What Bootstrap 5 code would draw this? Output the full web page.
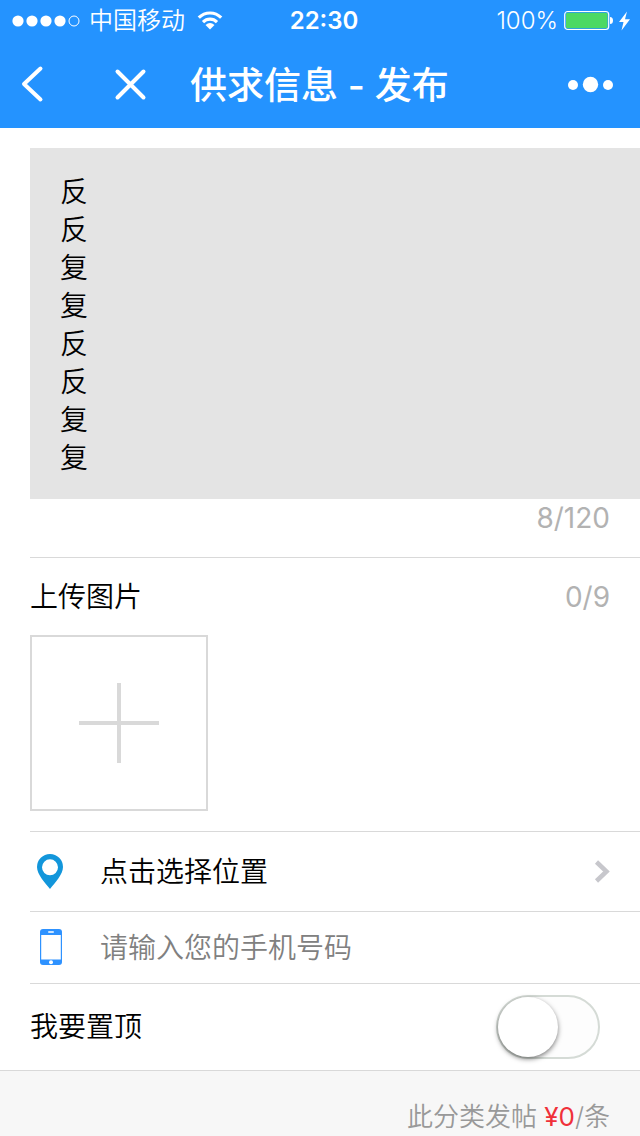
<!DOCTYPE html>
<html lang="zh-CN">
<head>
<meta charset="utf-8">
<meta name="viewport" content="width=device-width, initial-scale=1">
<title>供求信息 - 发布</title>
<link href="https://cdn.jsdelivr.net/npm/bootstrap@5.3.0/dist/css/bootstrap.min.css" rel="stylesheet">
<style>
  body { font-family: Inter, "Noto Sans CJK SC", sans-serif; font-size: 28px; line-height: 38px; font-weight: 350; color: #000; background: #fff; }
  svg { display: block; flex: none; }
  .top-area { background: #2493ff; color: #fff; }
  .status-bar { height: 40px; font-size: 24px; padding: 2px 4px 0 12px; }
  .status-side { flex: 1 1 0; gap: 8px; }
  .battery-side { gap: 6px; }
  .clock { font-weight: 600; }
  .title-bar { height: 88px; padding: 0 26px 0 20px; }
  .title-bar h1 { font-size: 37px; line-height: 44px; font-weight: 500; margin: 0 0 0 42px; padding-top: 4px; }
  .icon-btn { color: inherit; background: none; border: 0; padding: 0; }
  .close-btn { margin-left: 68px; }
  .form-area { padding: 20px 0 0 30px; }
  .post-text { background: #e4e4e4; color: #000; border: 0; border-radius: 0; padding: 25px 30px 22px; font: inherit; height: 351px; resize: none; overflow: hidden; }
  .post-text:focus { background: #e4e4e4; color: #000; }
  .counter { color: #b2b2b2; font-weight: 400; }
  .line-row { border-bottom: 1px solid #d9d9d9; padding-right: 30px; }
  .text-count { padding-bottom: 20px; }
  .upload-box { padding-bottom: 20px; }
  .upload-head { height: 77px; }
  .add-btn { width: 178px; height: 176px; border: 2px solid #d9d9d9; background: #fff; padding: 0; }
  .place-row { height: 80px; }
  .phone-row { height: 72px; }
  .top-row { height: 86px; padding-right: 40px; }
  .row-icon { flex: none; width: 40px; margin-right: 30px; }
  .place-link { color: #000; text-decoration: none; }
  .phone-input { font: inherit; border: 0; padding: 0; border-radius: 0; color: #000; height: 40px; }
  .phone-input::placeholder { color: #808080; }
  .pin-top { appearance: none; width: 104px; height: 64px; border: 2px solid #d5dbd6; border-radius: 32px; background: #fdfdfd; margin: 0; }
  .pin-top::before { content: ""; display: block; width: 60px; height: 60px; border-radius: 50%; background: #fff; box-shadow: 0 2px 5px rgba(0,0,0,.5); transition: margin .2s; }
  .pin-top:checked { background: #2493ff; }
  .pin-top:checked::before { margin-left: 40px; }
  .price-bar { background: #f7f7f7; border-top: 1px solid #d9d9d9; padding: 27px 30px 0; font-size: 26px; color: #999; }
  .price { color: #f0303a; font-weight: 400; }
</style>
</head>
<body class="d-flex flex-column min-vh-100">
<header class="top-area">
  <div class="status-bar d-flex align-items-center">
    <div class="status-side d-flex align-items-center">
      <svg width="69" height="14" viewBox="0 0 69 14" fill="#fff"><circle cx="6" cy="7" r="5.6"/><circle cx="20" cy="7" r="5.6"/><circle cx="34" cy="7" r="5.6"/><circle cx="48" cy="7" r="5.6"/><circle cx="62" cy="7" r="5" fill="none" stroke="#fff"/></svg>
      <span>中国移动</span>
      <svg class="ms-1" width="26" height="20" viewBox="0 0 26 20"><g fill="none" stroke="#fff" stroke-width="3.200"><path d="M1.800 6.700C8 .4 18 .4 24.200 6.700"/><path d="M6 11.100C10 7.200 16 7.200 20 11.100"/></g><path fill="#fff" d="M8.500 14Q13 10 17.500 14L13 18.500Z"/></svg>
    </div>
    <span class="clock">22:30</span>
    <div class="status-side battery-side d-flex align-items-center justify-content-end">
      <span>100%</span>
      <svg width="72" height="22" viewBox="0 0 72 22"><rect x=".7" y="1.500" width="44" height="18" rx="3" fill="none" stroke="#fff" stroke-width="1.200"/><rect x="2" y="2.700" width="41.500" height="15.600" rx="1.500" fill="#4cd964"/><path fill="#fff" d="M46 7q3 0 3 3.500t-3 3.500ZM63 1.500L55 12h4.500L57.500 20.500 66 9.300h-5Z"/></svg>
    </div>
  </div>
  <nav class="title-bar d-flex align-items-center" aria-label="导航">
    <button type="button" class="icon-btn" aria-label="返回"><svg width="26" height="40" viewBox="0 0 26 40" fill="none" stroke="#fff" stroke-width="4" stroke-linecap="round" stroke-linejoin="round"><path d="M20.500 4.500L4 20 20.500 35.500"/></svg></button>
    <button type="button" class="icon-btn close-btn" aria-label="关闭"><svg width="34" height="34" viewBox="0 0 34 34" stroke="#fff" stroke-width="4" stroke-linecap="round"><path d="M3.500 4.500L29.500 30.500M29.500 4.500L3.500 30.500"/></svg></button>
    <h1>供求信息 - 发布</h1>
    <button type="button" class="icon-btn ms-auto" aria-label="更多"><svg width="46" height="18" viewBox="0 0 46 18" fill="#fff"><circle cx="5" cy="10" r="5"/><circle cx="22.500" cy="9.500" r="7.700"/><circle cx="40" cy="10" r="5"/></svg></button>
  </nav>
</header>
<main>
  <form class="form-area">
    <textarea class="post-text form-control d-block w-100 shadow-none" maxlength="120" aria-label="信息内容">反
反
复
复
反
反
复
复</textarea>
    <div class="line-row counter text-count text-end">8/120</div>
    <section class="line-row upload-box">
      <div class="upload-head d-flex align-items-center justify-content-between">
        <span>上传图片</span><span class="counter">0/9</span>
      </div>
      <button type="button" class="add-btn d-flex align-items-center justify-content-center" aria-label="添加图片"><svg width="80" height="80" viewBox="0 0 80 80" stroke="#d9d9d9" stroke-width="4"><path d="M40 0V80M0 40H80"/></svg></button>
    </section>
    <a href="#" class="place-link line-row place-row d-flex align-items-center">
      <span class="row-icon d-flex justify-content-center"><svg width="28" height="36" viewBox="0 0 28 36"><path fill="#1296db" fill-rule="evenodd" d="M14 0A13 13 0 0 0 1 13C1 20.500 9 28.500 14 35 19 28.500 27 20.500 27 13A13 13 0 0 0 14 0ZM14 5.300a8 8 0 1 1 0 16 8 8 0 0 1 0-16Z"/></svg></span>
      <span>点击选择位置</span>
      <svg class="ms-auto" width="16" height="24" viewBox="0 0 16 24" fill="none" stroke="#c7c7cc" stroke-width="4.500"><path d="M2.500 2L12.500 11.500 2.500 21"/></svg>
    </a>
    <div class="line-row phone-row d-flex align-items-center">
      <label for="phone" class="row-icon d-flex justify-content-center" aria-label="手机号码"><svg width="24" height="38" viewBox="0 0 24 38"><rect x="2" y="0" width="22" height="36" rx="3" fill="#2e92ff"/><path fill="#fff" d="M3.200 6h19.600v24.500H3.200Z"/><rect x="10" y="2.200" width="6" height="1.600" rx=".8" fill="#fff"/><circle cx="13" cy="33.200" r="2" fill="#fff"/></svg></label>
      <input id="phone" type="tel" class="phone-input form-control shadow-none" placeholder="请输入您的手机号码">
    </div>
    <div class="top-row d-flex align-items-center justify-content-between">
      <label for="pin">我要置顶</label>
      <input id="pin" class="pin-top" type="checkbox" role="switch">
    </div>
  </form>
</main>
<footer class="price-bar flex-grow-1 text-end">此分类发帖 <span class="price">¥0</span>/条</footer>
<script src="https://cdn.jsdelivr.net/npm/bootstrap@5.3.0/dist/js/bootstrap.bundle.min.js"></script>
</body>
</html>
